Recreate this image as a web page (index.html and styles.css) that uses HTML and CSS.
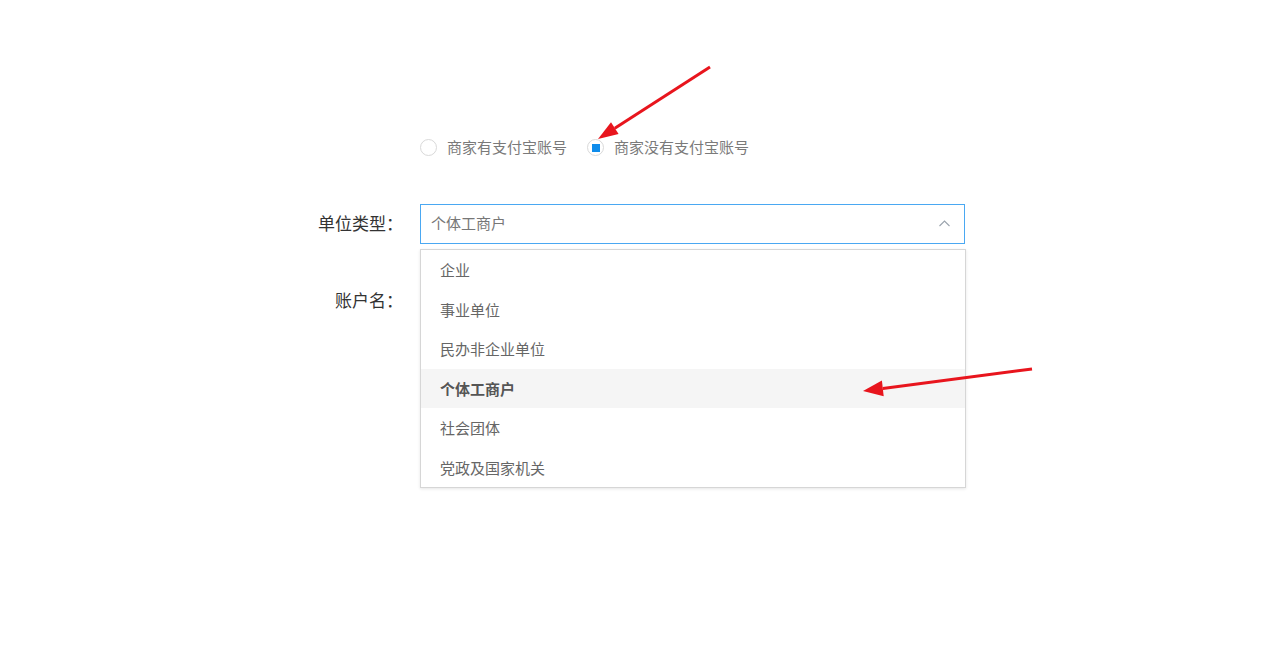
FILE: index.html
```html
<!DOCTYPE html>
<html lang="zh-CN">
<head>
<meta charset="utf-8">
<title>单位类型</title>
<link rel="stylesheet" href="styles.css">
</head>
<body>
<div class="page">
  <div class="radio-row">
    <label class="radio">
      <span class="radio-dot"></span>
      <span class="radio-text">商家有支付宝账号</span>
    </label>
    <label class="radio checked">
      <span class="radio-dot"><span class="radio-inner"></span></span>
      <span class="radio-text">商家没有支付宝账号</span>
    </label>
  </div>

  <div class="field field-type">
    <div class="field-label">单位类型：</div>
    <div class="select-wrap">
      <div class="select">
        <span class="select-value">个体工商户</span>
        <svg class="chevron" width="11" height="7" viewBox="0 0 11 7"><polyline points="0.5,6 5.5,1 10.5,6" fill="none" stroke="#9aa3ad" stroke-width="1.1"/></svg>
      </div>
      <ul class="dropdown">
        <li class="option">企业</li>
        <li class="option">事业单位</li>
        <li class="option">民办非企业单位</li>
        <li class="option active">个体工商户</li>
        <li class="option">社会团体</li>
        <li class="option">党政及国家机关</li>
      </ul>
    </div>
  </div>

  <div class="field field-name">
    <div class="field-label">账户名：</div>
    <div class="field-control"></div>
  </div>
</div>

<svg class="annotations" width="1274" height="659" viewBox="0 0 1274 659">
  <line x1="710" y1="67" x2="614.8" y2="128.2" stroke="#e8151d" stroke-width="3"/>
  <polygon points="598,139 618.6,134.1 611.0,122.3" fill="#e8151d"/>
  <line x1="1032" y1="369" x2="882.8" y2="388.4" stroke="#e8151d" stroke-width="3"/>
  <polygon points="863,391 883.7,396.3 881.9,380.5" fill="#e8151d"/>
</svg>
</body>
</html>
```

FILE: styles.css
```css
* { box-sizing: border-box; }

html, body {
  margin: 0;
  padding: 0;
  background: #fff;
}

body {
  font-family: "Noto Sans CJK SC", "Noto Sans", sans-serif;
  width: 1274px;
  height: 659px;
  overflow: hidden;
  position: relative;
}

.page {
  padding-top: 139px;
}

.radio-row {
  display: flex;
  align-items: center;
  margin-left: 420px;
  height: 17px;
}

.radio {
  display: flex;
  align-items: center;
  margin-right: 20px;
}

.radio-dot {
  width: 17px;
  height: 17px;
  border: 1px solid #d9d9d9;
  border-radius: 50%;
  display: flex;
  align-items: center;
  justify-content: center;
  background: #fff;
}

.radio-inner {
  width: 8px;
  height: 8px;
  background: #0f8ceb;
}

.radio-text {
  margin-left: 10px;
  font-size: 15px;
  color: #7a7a7a;
  line-height: 17px;
  position: relative;
  top: -1px;
}

.field {
  display: grid;
  grid-template-columns: 395px 545px;
  column-gap: 25px;
  align-items: center;
  height: 40px;
}

.field-type {
  margin-top: 48px;
}

.field-name {
  margin-top: 37px;
}

.field-label {
  text-align: right;
  font-size: 17px;
  line-height: 20px;
  color: #333;
  margin-top: -2px;
  margin-right: -8px;
}

.select-wrap {
  position: relative;
  height: 40px;
}

.select {
  height: 40px;
  border: 1px solid #4aa8f2;
  display: flex;
  align-items: center;
  justify-content: space-between;
  padding: 0 14px 0 10px;
}

.select-value {
  font-size: 15px;
  line-height: 20px;
  color: #777;
  margin-top: -2px;
}

.chevron {
  display: block;
  margin-top: -1px;
}

.dropdown {
  position: absolute;
  left: 0;
  top: 45px;
  width: 546px;
  margin: 0;
  padding: 0;
  list-style: none;
  background: #fff;
  border: 1px solid #d6d6d6;
  box-shadow: 0 1px 3px rgba(0, 0, 0, 0.1);
  z-index: 2;
}

.option {
  height: 39.5px;
  line-height: 39.5px;
  padding-left: 19px;
  font-size: 15px;
  color: #666;
}

.option.active {
  background: #f5f5f5;
  font-weight: bold;
  color: #555;
}

.annotations {
  position: absolute;
  left: 0;
  top: 0;
  pointer-events: none;
  z-index: 5;
}
```
